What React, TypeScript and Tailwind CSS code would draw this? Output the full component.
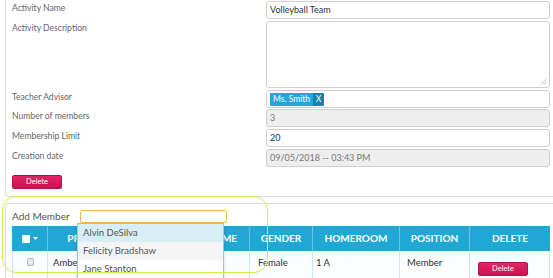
import React from "react";

const Label = ({ children }: { children: React.ReactNode }) => (
  <div className="w-[254px] shrink-0 text-[8.6px] leading-[15px] text-[#666]">{children}</div>
);

const inputBase =
  "w-[284px] h-[18px] border border-[#cfcfcf] rounded-[3px] px-[3px] text-[9px] flex items-center";

const CrimsonBtn = ({ className = "" }: { className?: string }) => (
  <div
    className={
      "w-[50px] h-[14px] rounded-[2px] border border-[#b3114a] bg-gradient-to-b from-[#e42466] to-[#c8124f] text-white text-[7.5px] flex items-center justify-center " +
      className
    }
  >
    Delete
  </div>
);

export default function App() {
  const cols = "grid grid-cols-[36px_128px_74px_63px_87px_70px_80px]";
  return (
    <div className="relative w-[553px] h-[278px] overflow-hidden bg-white font-['Lato',sans-serif]">
      {/* Panel 1 */}
      <div className="ml-[5px] w-[560px] h-[197px] border-x border-b border-[#dcdcdc] rounded-b-[4px] pl-[6px] pt-[1px] flex flex-col">
        <div className="flex">
          <Label>Activity Name</Label>
          <div className={inputBase + " text-[#333]"}>Volleyball Team</div>
        </div>
        <div className="flex mt-[2px]">
          <Label>Activity Description</Label>
          <div className="relative w-[284px] h-[67px] border border-[#cfcfcf] rounded-[3px]">
            <svg className="absolute right-[2px] bottom-[2px]" width="7" height="7" viewBox="0 0 7 7">
              <line x1="6.5" y1="1" x2="1" y2="6.5" stroke="#aaa" strokeWidth="0.8" />
              <line x1="6.5" y1="4" x2="4" y2="6.5" stroke="#aaa" strokeWidth="0.8" />
            </svg>
          </div>
        </div>
        <div className="flex mt-[2px]">
          <Label>Teacher Advisor</Label>
          <div className={inputBase + " px-[3px]"}>
            <div className="flex h-[13px] rounded-[1px] overflow-hidden text-white text-[8.5px]">
              <span className="bg-[#22a6d6] px-[3px] flex items-center">Ms. Smith</span>
              <span className="bg-[#1683ab] w-[11px] flex items-center justify-center">X</span>
            </div>
          </div>
        </div>
        <div className="flex mt-[1px]">
          <Label>Number of members</Label>
          <div className={inputBase + " bg-[#eeeeee] text-[#777]"}>3</div>
        </div>
        <div className="flex mt-[2px]">
          <Label>Membership Limit</Label>
          <div className={inputBase + " text-[#333]"}>20</div>
        </div>
        <div className="flex mt-[2px]">
          <Label>Creation date</Label>
          <div className={inputBase + " bg-[#eeeeee] text-[#777]"}>09/05/2018 -- 03:43 PM</div>
        </div>
        <CrimsonBtn className="mt-[8px]" />
      </div>

      {/* Panel 2 */}
      <div className="mt-[6px] ml-[5px] w-[560px] h-[120px] border-x border-t border-[#dcdcdc] rounded-t-[4px] pl-[6px] pt-[6px]">
        <div className="flex items-center">
          <div className="w-[68px] text-[10px] leading-[13px] text-[#555]">Add Member</div>
          <div className="w-[147px] h-[13px] border border-[#f4b552] rounded-[2px] bg-white" />
        </div>
        <div className="mt-[3px] w-[538px]">
          <div className={cols + " h-[25px] bg-[#1fa7d5] text-white font-bold text-[10px]"}>
            <div className="flex items-center justify-center gap-[3px] border-r border-[#6cc4e4]">
              <div className="w-[8px] h-[8px] bg-white rounded-[1px]" />
              <svg width="5" height="3" viewBox="0 0 5 3">
                <path d="M0 0 L5 0 L2.5 3 Z" fill="#fff" />
              </svg>
            </div>
            <div className="flex items-center justify-center border-r border-[#6cc4e4]">PREFERRED NAME</div>
            <div className="flex items-center justify-center border-r border-[#6cc4e4]">SURNAME</div>
            <div className="flex items-center justify-center border-r border-[#6cc4e4]">GENDER</div>
            <div className="flex items-center justify-center border-r border-[#6cc4e4]">HOMEROOM</div>
            <div className="flex items-center justify-center border-r border-[#6cc4e4]">POSITION</div>
            <div className="flex items-center justify-center">DELETE</div>
          </div>
          <div className={cols + " h-[30px] bg-[#fbfdfe] text-[9.5px] text-[#333]"}>
            <div className="flex justify-center pt-[7px] border-x border-[#cde6f1]">
              <div className="w-[7px] h-[8px] rounded-[2px] border border-[#b5b5b5] bg-[#eaeaea]" />
            </div>
            <div className="pl-[5px] pt-[5px] leading-[14px] border-r border-[#cde6f1]">Amber</div>
            <div className="pl-[5px] pt-[5px] leading-[14px] border-r border-[#cde6f1]">Matthews</div>
            <div className="pl-[8px] pt-[5px] leading-[14px] border-r border-[#cde6f1]">Female</div>
            <div className="pl-[3px] pt-[5px] leading-[14px] border-r border-[#cde6f1]">1 A</div>
            <div className="pl-[7px] pt-[5px] leading-[14px] border-r border-[#cde6f1]">Member</div>
            <div className="pl-[8px] pt-[11px] border-r border-[#cde6f1]">
              <CrimsonBtn />
            </div>
          </div>
        </div>
      </div>

      {/* Autocomplete dropdown */}
      <div className="absolute left-[77px] top-[223px] w-[147px] border border-[#9cc6d4] bg-white text-[9.5px] text-[#555] shadow-[0_2px_4px_rgba(0,0,0,0.15)]">
        <div className="h-[18px] pl-[5px] flex items-center bg-[#d7eef7]">Alvin DeSilva</div>
        <div className="h-[18px] pl-[5px] flex items-center bg-[#f5f5f5]">Felicity Bradshaw</div>
        <div className="h-[18px] pl-[5px] flex items-center bg-white">Jane Stanton</div>
      </div>

      {/* Highlight annotation */}
      <div className="absolute left-[2px] top-[196px] w-[266px] h-[77px] rounded-[14px] border-[1.5px] border-[#c9f24e] pointer-events-none" />
    </div>
  );
}
